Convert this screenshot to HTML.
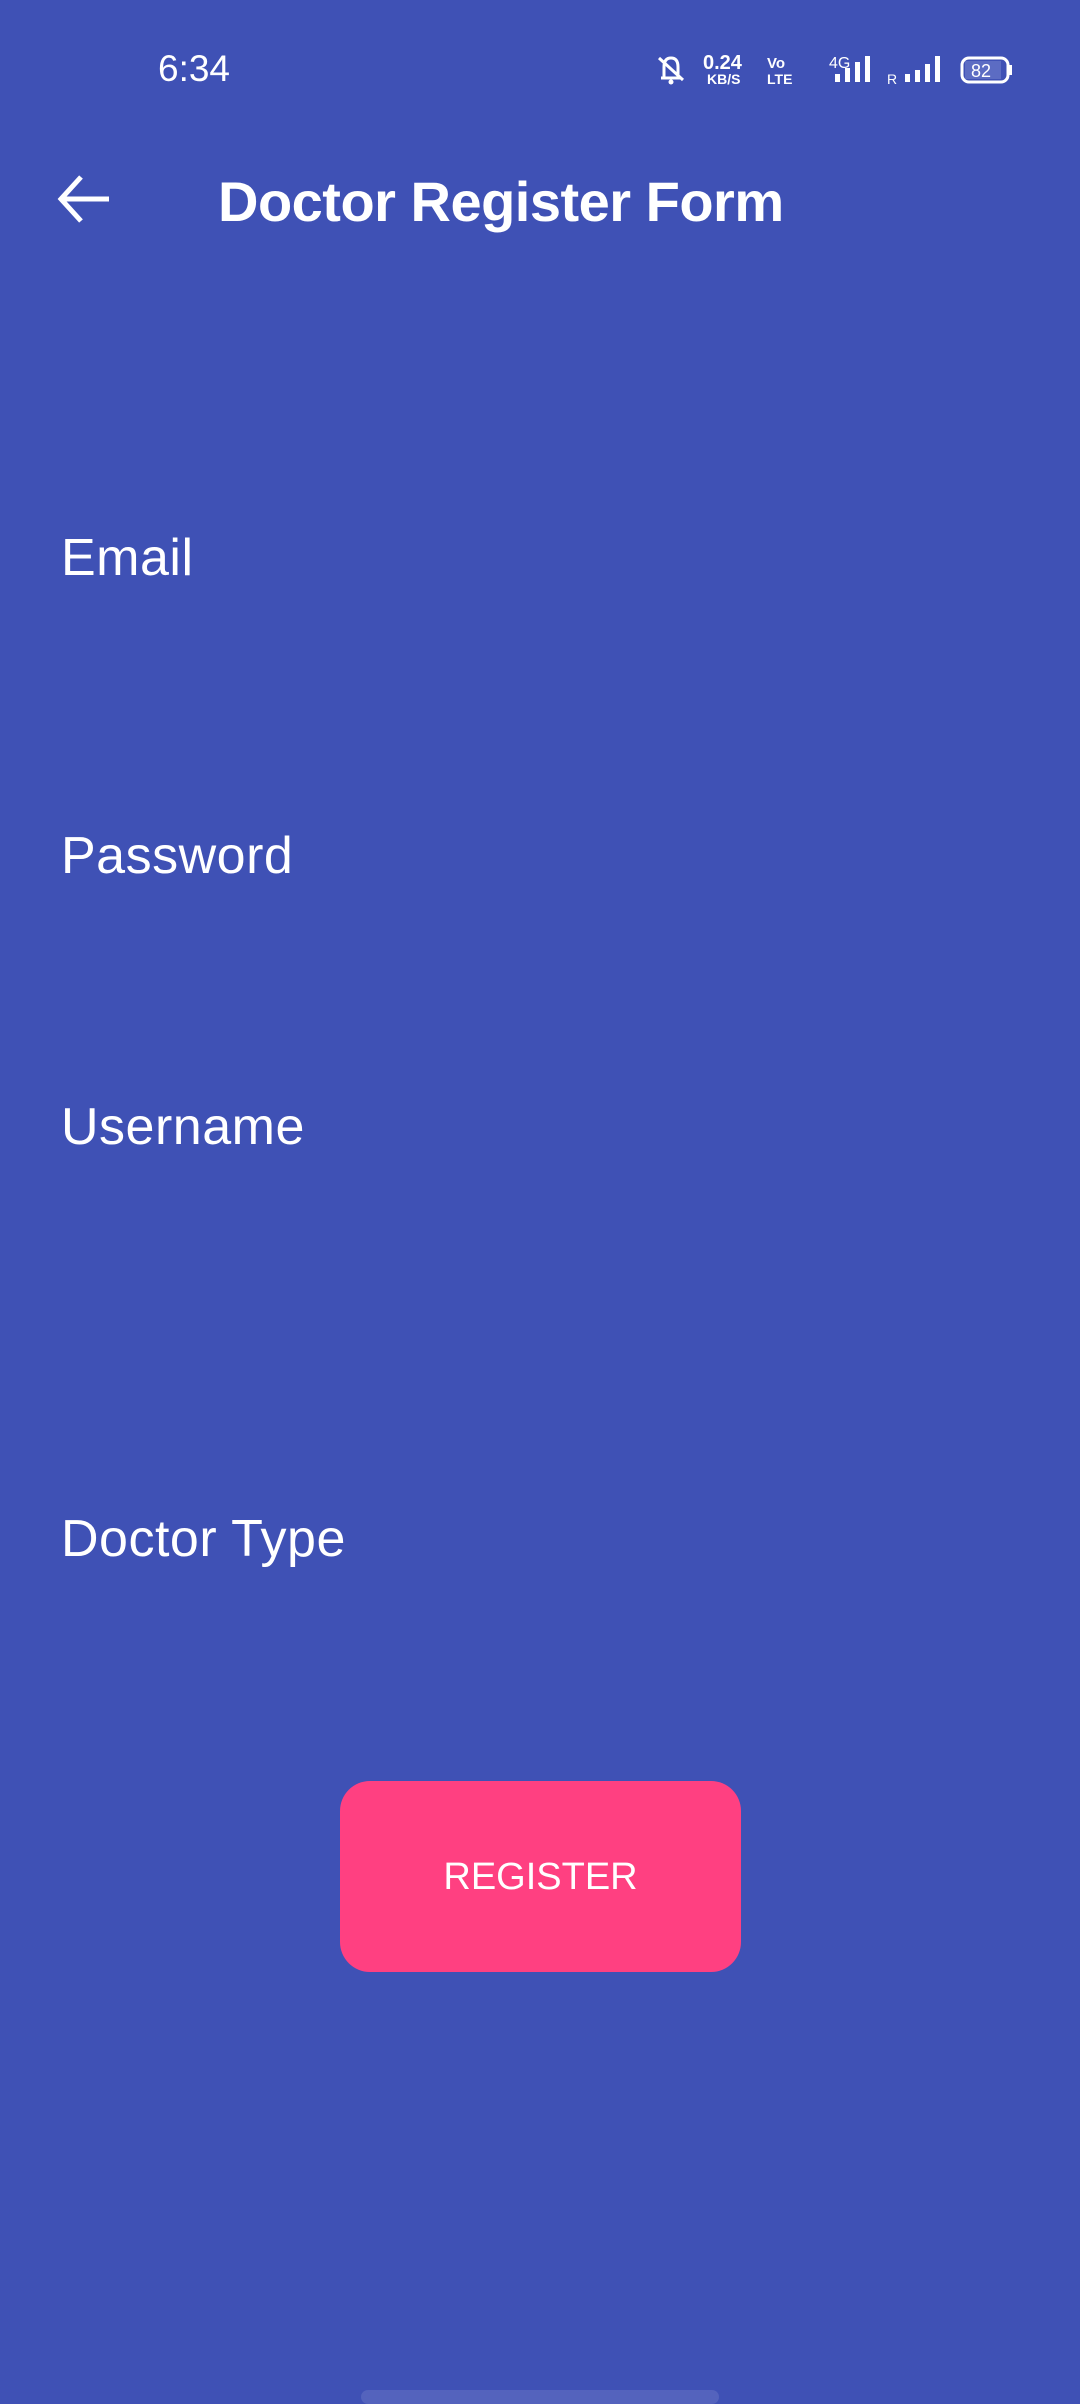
<!DOCTYPE html>
<html><head><meta charset="utf-8"><style>
html,body{margin:0;padding:0}
body{width:1080px;height:2400px;background:#3F51B5;position:relative;overflow:hidden;font-family:"Liberation Sans",sans-serif;color:#fff}
.a{position:absolute;white-space:nowrap;line-height:1}
.lbl{font-size:52px;left:61px;letter-spacing:0.5px}
</style></head><body>
<div class="a" style="left:158px;top:50px;font-size:37px">6:34</div>
<svg class="a" style="left:655px;top:48px" width="360" height="44" viewBox="0 0 360 44">
 <g fill="none" stroke="#fff" stroke-width="3">
  <path d="M6 30 L26 30 M9 30 L9 19 Q9 10 16 10 Q23 10 23 19 L23 30 M4 10 L28 32"/>
 </g>
 <circle cx="16" cy="34" r="2.5" fill="#fff"/>
 <text x="48" y="21" font-size="20" font-weight="bold" fill="#fff" font-family="Liberation Sans">0.24</text>
 <text x="52" y="36" font-size="14" font-weight="bold" fill="#fff" font-family="Liberation Sans">KB/S</text>
 <text x="112" y="20" font-size="15" font-weight="bold" fill="#fff" font-family="Liberation Sans">Vo</text>
 <text x="112" y="36" font-size="14" font-weight="bold" fill="#fff" font-family="Liberation Sans">LTE</text>
 <text x="174" y="20" font-size="16" fill="#fff" font-family="Liberation Sans">4G</text>
 <rect x="180" y="26" width="5" height="8" fill="#fff"/><rect x="190" y="20" width="5" height="14" fill="#fff"/><rect x="200" y="14" width="5" height="20" fill="#fff"/><rect x="210" y="8" width="5" height="26" fill="#fff"/>
 <text x="232" y="36" font-size="14" fill="#fff" font-family="Liberation Sans">R</text>
 <rect x="250" y="26" width="5" height="8" fill="#fff"/><rect x="260" y="22" width="5" height="12" fill="#fff"/><rect x="270" y="16" width="5" height="18" fill="#fff"/><rect x="280" y="8" width="5" height="26" fill="#fff"/>
 <rect x="307" y="10" width="46" height="24" rx="7" fill="none" stroke="#fff" stroke-width="3"/>
 <rect x="310" y="13" width="36" height="18" fill="#5c6cc3"/>
 <rect x="354" y="17" width="3" height="10" fill="#fff"/>
 <text x="316" y="29" font-size="18" fill="#fff" font-family="Liberation Sans">82</text>
</svg>
<svg class="a" style="left:56px;top:172px" width="56" height="56" viewBox="0 0 56 56">
 <path d="M53 27 L6 27 M25 5 L5 27 L25 49" fill="none" stroke="#fff" stroke-width="5"/>
</svg>
<div class="a" style="left:218px;top:174px;font-size:56px;font-weight:bold;letter-spacing:-0.5px">Doctor Register Form</div>
<div class="a lbl" style="top:532px">Email</div>
<div class="a lbl" style="top:830px">Password</div>
<div class="a lbl" style="top:1101px">Username</div>
<div class="a lbl" style="top:1513px">Doctor Type</div>
<div class="a" style="left:340px;top:1781px;width:401px;height:191px;background:#FF4081;border-radius:30px;font-size:38px;display:flex;align-items:center;justify-content:center">REGISTER</div>
<div class="a" style="left:361px;top:2390px;width:358px;height:14px;background:#5463bd;border-radius:7px"></div>
</body></html>
